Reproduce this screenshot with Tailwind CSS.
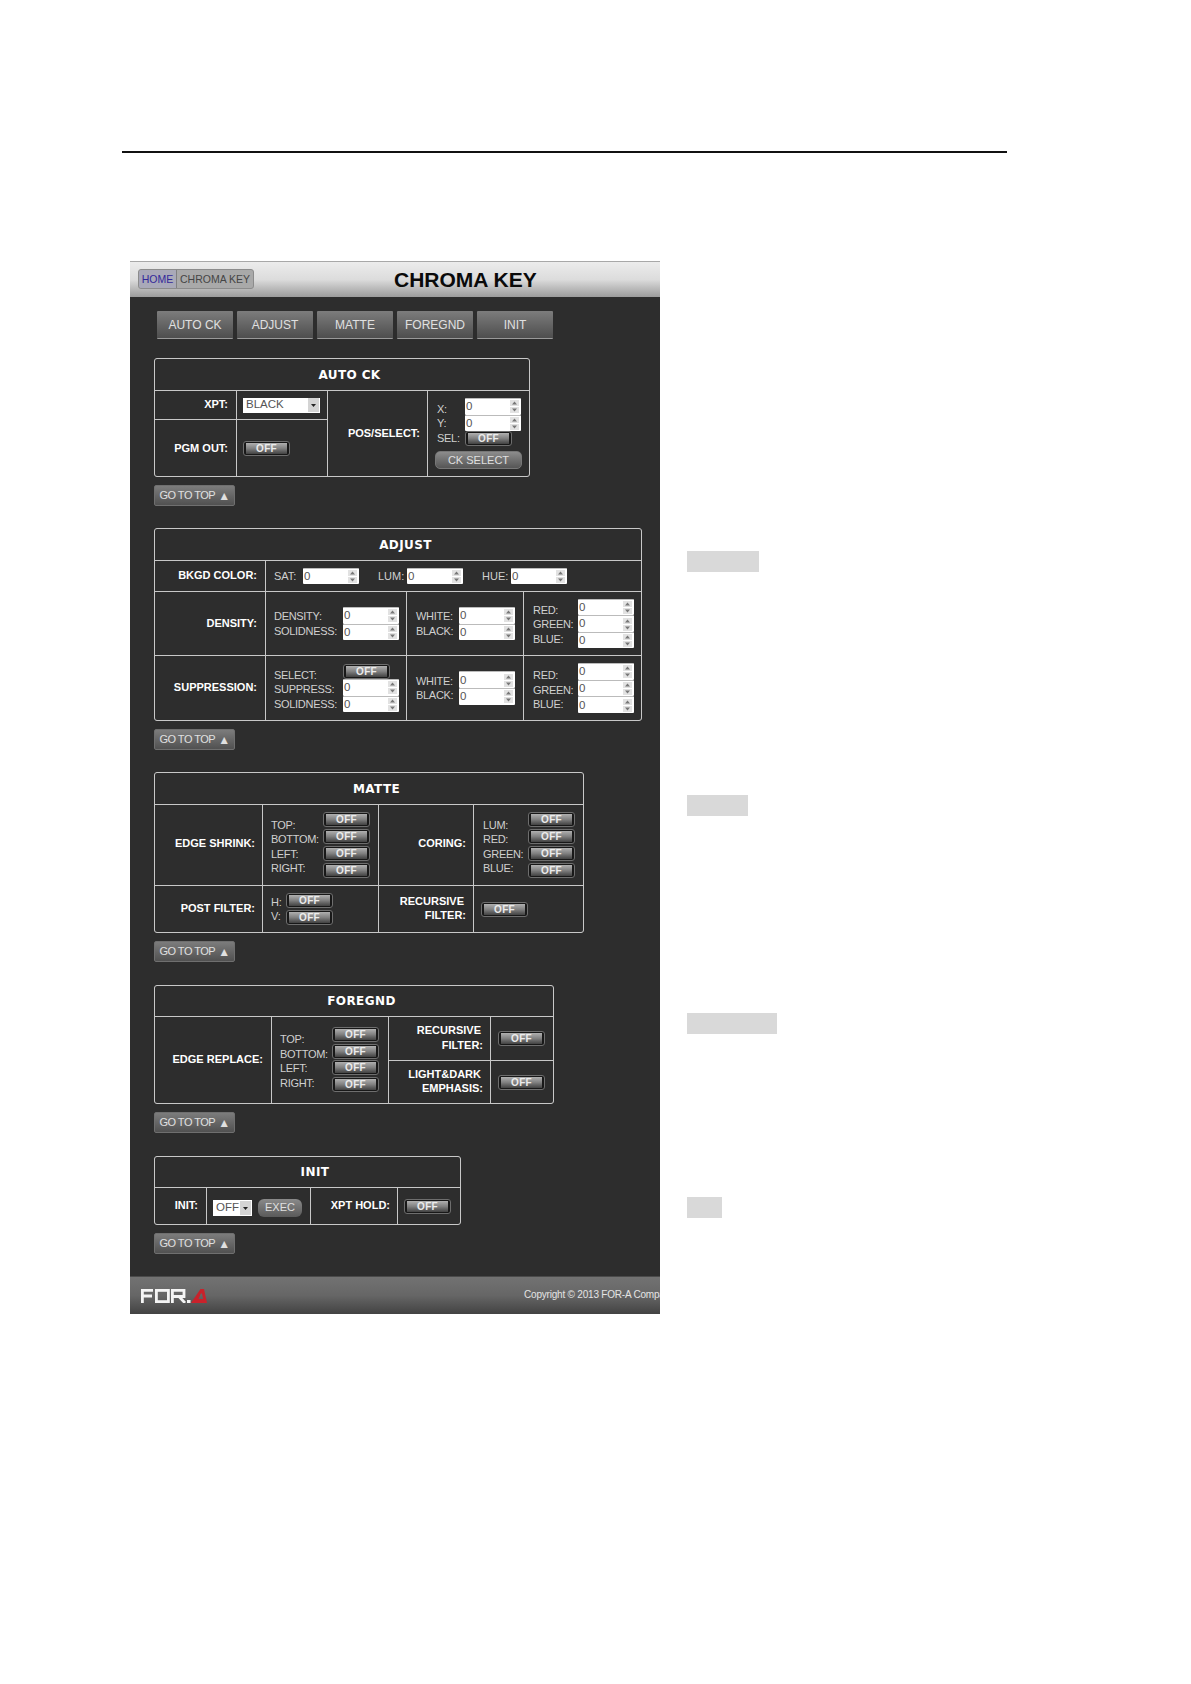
<!DOCTYPE html>
<html lang="en">

<head>
  <meta charset="UTF-8" />
  <title>Chroma Key</title>
  <script src="https://cdn.jsdelivr.net/npm/@tailwindcss/browser@4"></script>
</head>

<body class="bg-white m-0 h-[1684px] overflow-hidden font-['Liberation_Sans',Arial,sans-serif]">

  <div class="ml-[122px] mt-[151px] w-[885px] h-[2px] bg-[#111]"></div>

  <div class="flex mt-[108px]">
    <!-- screen capture -->
    <div class="ml-[130px] w-[530px] h-[1053px] flex flex-col overflow-hidden bg-[#2d2d2d] text-[11px] text-[#d0d0d0]">

      <div class="relative h-[36px] shrink-0 border-t border-[#a8a8a8] bg-gradient-to-b from-[#ececec] via-[#dcdcdc] to-[#9c9c9c]">
        <div class="absolute left-[8px] top-[7px] w-[116px] h-[20px] flex rounded-[3px] border border-[#8c8c8c] bg-[#a9a9a9] text-[10.5px] leading-[18px]">
          <span class="w-[38px] text-center text-[#33289a] bg-[#a9a9b8] rounded-l-[3px] border-r border-[#808080]">HOME</span>
          <span class="flex-1 text-center text-[#454545]">CHROMA KEY</span>
        </div>
        <div class="ml-[264px] w-[142px] mt-[7px] text-center text-[21px] leading-[21px] font-bold text-[#0a0a0a] whitespace-nowrap">CHROMA KEY</div>
      </div>

      <div class="flex gap-[4px] ml-[27px] mt-[14px] mb-[19px] text-[12px] text-[#e0e0e0]">
        <div class="w-[76px] h-[28px] flex items-center justify-center rounded-[1px] border-b border-[#999] bg-gradient-to-b from-[#7d7d7d] to-[#4e4e4e]">AUTO CK</div>
        <div class="w-[76px] h-[28px] flex items-center justify-center rounded-[1px] border-b border-[#999] bg-gradient-to-b from-[#7d7d7d] to-[#4e4e4e]">ADJUST</div>
        <div class="w-[76px] h-[28px] flex items-center justify-center rounded-[1px] border-b border-[#999] bg-gradient-to-b from-[#7d7d7d] to-[#4e4e4e]">MATTE</div>
        <div class="w-[76px] h-[28px] flex items-center justify-center rounded-[1px] border-b border-[#999] bg-gradient-to-b from-[#7d7d7d] to-[#4e4e4e]">FOREGND</div>
        <div class="w-[76px] h-[28px] flex items-center justify-center rounded-[1px] border-b border-[#999] bg-gradient-to-b from-[#7d7d7d] to-[#4e4e4e]">INIT</div>
      </div>

      <div class="ml-[24px]">

        <!-- AUTO CK -->
        <div class="mb-[22px]">
          <div class="w-[376px] h-[119px] grid grid-cols-[81px_90px_99px_101px] grid-rows-[31px_28px_56px] gap-px border border-[#c8c8c8] rounded-[3px] overflow-hidden bg-[#c8c8c8] [&>*]:bg-[#2d2d2d]">
            <div class="col-span-full flex items-center justify-center pl-[15px] font-['DejaVu_Sans',sans-serif] font-bold tracking-[0.4px] text-[12px] text-white">AUTO CK</div>
            <div class="flex items-center justify-end pr-[8px] pb-[2px] font-bold text-white">XPT:</div>
            <div class="flex items-center pl-[6px]">
              <div class="w-[77px] h-[15px] flex items-center bg-white pl-[3px] text-[#555] text-[11.5px]">BLACK<span data-drop class="ml-auto"></span></div>
            </div>
            <div class="row-span-2 flex items-center justify-end pr-[7px] pb-[1px] font-bold text-white">POS/SELECT:</div>
            <div class="row-span-2 pl-[9px] pt-[7px]">
              <div class="flex items-center">
                <div class="w-[28px] pt-[3px] leading-[14.5px] tracking-[-0.3px]">X:<br>Y:<br>SEL:</div>
                <div class="flex flex-col"><span data-spin></span><span data-spin></span><span data-off></span></div>
              </div>
              <div class="-ml-[2px] mt-[5px] w-[87px] h-[18px] flex items-center justify-center rounded-[5px] border border-[#777] bg-gradient-to-b from-[#8c8c8c] to-[#565656] text-[#e0e0e0]">CK SELECT</div>
            </div>
            <div class="flex items-center justify-end pr-[8px] font-bold text-white">PGM OUT:</div>
            <div class="flex items-center pl-[6px]"><span data-off></span></div>
          </div>
          <div class="mt-[8px] w-[81px] h-[21px] flex items-center justify-center gap-[3px] rounded-[2px] border border-[#6f6f6f] bg-gradient-to-b from-[#7c7c7c] to-[#515151] text-[11px] tracking-[-0.5px] text-[#e0e0e0]">GO TO TOP <span class="text-[12px]">▲</span></div>
        </div>

        <!-- ADJUST -->
        <div class="mb-[22px]">
          <div class="w-[488px] h-[193px] grid grid-cols-[110px_140px_116px_117px] grid-rows-[31px_30px_63px_64px] gap-px border border-[#c8c8c8] rounded-[3px] overflow-hidden bg-[#c8c8c8] [&>*]:bg-[#2d2d2d]">
            <div class="col-span-full flex items-center justify-center pl-[15px] font-['DejaVu_Sans',sans-serif] font-bold tracking-[0.4px] text-[12px] text-white">ADJUST</div>
            <div class="flex items-center justify-end pr-[8px] pb-[2px] font-bold text-white">BKGD COLOR:</div>
            <div class="col-span-3 flex items-center pl-[8px] gap-[19px]">
              <div class="flex items-center"><span class="w-[29px]">SAT:</span><span data-spin></span></div>
              <div class="flex items-center"><span class="w-[29px]">LUM:</span><span data-spin></span></div>
              <div class="flex items-center"><span class="w-[29px]">HUE:</span><span data-spin></span></div>
            </div>
            <div class="flex items-center justify-end pr-[8px] pb-[1px] font-bold text-white">DENSITY:</div>
            <div class="flex items-center pl-[8px]">
              <div class="w-[69px] leading-[14.5px] tracking-[-0.3px]">DENSITY:<br>SOLIDNESS:</div>
              <div class="flex flex-col"><span data-spin></span><span data-spin></span></div>
            </div>
            <div class="flex items-center pl-[9px]">
              <div class="w-[43px] leading-[14.5px] tracking-[-0.3px]">WHITE:<br>BLACK:</div>
              <div class="flex flex-col"><span data-spin></span><span data-spin></span></div>
            </div>
            <div class="flex items-center pl-[9px]">
              <div class="w-[45px] pt-[2px] leading-[14.5px] tracking-[-0.3px]">RED:<br>GREEN:<br>BLUE:</div>
              <div class="flex flex-col"><span data-spin></span><span data-spin></span><span data-spin></span></div>
            </div>
            <div class="flex items-center justify-end pr-[8px] pb-[2px] font-bold text-white">SUPPRESSION:</div>
            <div class="flex items-center pl-[8px]">
              <div class="w-[69px] leading-[14.5px] tracking-[-0.3px] pt-[3px]">SELECT:<br>SUPPRESS:<br>SOLIDNESS:</div>
              <div class="flex flex-col"><span data-off></span><span data-spin></span><span data-spin></span></div>
            </div>
            <div class="flex items-center pl-[9px]">
              <div class="w-[43px] leading-[14.5px] tracking-[-0.3px]">WHITE:<br>BLACK:</div>
              <div class="flex flex-col"><span data-spin></span><span data-spin></span></div>
            </div>
            <div class="flex items-center pl-[9px]">
              <div class="w-[45px] pt-[4px] leading-[14.5px] tracking-[-0.3px]">RED:<br>GREEN:<br>BLUE:</div>
              <div class="flex flex-col"><span data-spin></span><span data-spin></span><span data-spin></span></div>
            </div>
          </div>
          <div class="mt-[8px] w-[81px] h-[21px] flex items-center justify-center gap-[3px] rounded-[2px] border border-[#6f6f6f] bg-gradient-to-b from-[#7c7c7c] to-[#515151] text-[11px] tracking-[-0.5px] text-[#e0e0e0]">GO TO TOP <span class="text-[12px]">▲</span></div>
        </div>

        <!-- MATTE -->
        <div class="mb-[23px]">
          <div class="w-[430px] h-[161px] grid grid-cols-[107px_115px_94px_109px] grid-rows-[31px_80px_46px] gap-px border border-[#c8c8c8] rounded-[3px] overflow-hidden bg-[#c8c8c8] [&>*]:bg-[#2d2d2d]">
            <div class="col-span-full flex items-center justify-center pl-[15px] font-['DejaVu_Sans',sans-serif] font-bold tracking-[0.4px] text-[12px] text-white">MATTE</div>
            <div class="flex items-center justify-end pr-[7px] pb-[4px] font-bold text-white">EDGE SHRINK:</div>
            <div class="flex items-center pl-[8px]">
              <div class="w-[52px] pt-[3px] leading-[14.5px] tracking-[-0.3px]">TOP:<br>BOTTOM:<br>LEFT:<br>RIGHT:</div>
              <div class="flex flex-col gap-[1.7px]"><span data-off></span><span data-off></span><span data-off></span><span data-off></span></div>
            </div>
            <div class="flex items-center justify-end pr-[7px] pb-[4px] font-bold text-white">CORING:</div>
            <div class="flex items-center pl-[9px]">
              <div class="w-[45px] pt-[3px] leading-[14.5px] tracking-[-0.3px]">LUM:<br>RED:<br>GREEN:<br>BLUE:</div>
              <div class="flex flex-col gap-[1.7px]"><span data-off></span><span data-off></span><span data-off></span><span data-off></span></div>
            </div>
            <div class="flex items-center justify-end pr-[7px] pb-[1px] font-bold text-white">POST FILTER:</div>
            <div class="flex items-center pl-[8px]">
              <div class="w-[15px] leading-[14.5px] tracking-[-0.3px]">H:<br>V:</div>
              <div class="flex flex-col gap-[1.7px]"><span data-off></span><span data-off></span></div>
            </div>
            <div class="flex items-center justify-end text-right pr-[7px] pb-[2px] font-bold text-white leading-[14.5px]"><div><span class="pr-[2px]">RECURSIVE</span><br>FILTER:</div></div>
            <div class="flex items-center pl-[7px]"><span data-off></span></div>
          </div>
          <div class="mt-[8px] w-[81px] h-[21px] flex items-center justify-center gap-[3px] rounded-[2px] border border-[#6f6f6f] bg-gradient-to-b from-[#7c7c7c] to-[#515151] text-[11px] tracking-[-0.5px] text-[#e0e0e0]">GO TO TOP <span class="text-[12px]">▲</span></div>
        </div>

        <!-- FOREGND -->
        <div class="mb-[23px]">
          <div class="w-[400px] h-[119px] grid grid-cols-[116px_116px_101px_62px] grid-rows-[30px_43px_42px] gap-px border border-[#c8c8c8] rounded-[3px] overflow-hidden bg-[#c8c8c8] [&>*]:bg-[#2d2d2d]">
            <div class="col-span-full flex items-center justify-center pl-[15px] font-['DejaVu_Sans',sans-serif] font-bold tracking-[0.4px] text-[12px] text-white">FOREGND</div>
            <div class="row-span-2 flex items-center justify-end pr-[8px] pb-[1px] font-bold text-white">EDGE REPLACE:</div>
            <div class="row-span-2 flex items-start pl-[8px] pt-[10px]">
              <div class="w-[52px] pt-[5px] leading-[14.5px] tracking-[-0.3px]">TOP:<br>BOTTOM:<br>LEFT:<br>RIGHT:</div>
              <div class="flex flex-col gap-[1.7px]"><span data-off></span><span data-off></span><span data-off></span><span data-off></span></div>
            </div>
            <div class="flex items-center justify-end text-right pr-[7px] pb-[2px] font-bold text-white leading-[14.5px]"><div><span class="pr-[2px]">RECURSIVE</span><br>FILTER:</div></div>
            <div class="flex items-center pl-[7px]"><span data-off></span></div>
            <div class="flex items-center justify-end text-right pr-[7px] pb-[2px] font-bold text-white leading-[14.5px]"><div><span class="pr-[2px]">LIGHT&amp;DARK</span><br>EMPHASIS:</div></div>
            <div class="flex items-center pl-[7px]"><span data-off></span></div>
          </div>
          <div class="mt-[8px] w-[81px] h-[21px] flex items-center justify-center gap-[3px] rounded-[2px] border border-[#6f6f6f] bg-gradient-to-b from-[#7c7c7c] to-[#515151] text-[11px] tracking-[-0.5px] text-[#e0e0e0]">GO TO TOP <span class="text-[12px]">▲</span></div>
        </div>

        <!-- INIT -->
        <div>
          <div class="w-[307px] h-[69px] grid grid-cols-[51px_103px_86px_62px] grid-rows-[30px_36px] gap-px border border-[#c8c8c8] rounded-[3px] overflow-hidden bg-[#c8c8c8] [&>*]:bg-[#2d2d2d]">
            <div class="col-span-full flex items-center justify-center pl-[15px] font-['DejaVu_Sans',sans-serif] font-bold tracking-[0.4px] text-[12px] text-white">INIT</div>
            <div class="flex items-center justify-end pr-[8px] pb-[2px] font-bold text-white">INIT:</div>
            <div class="flex items-center pl-[6px] pt-[3px] gap-[6px]">
              <div class="w-[39px] h-[16px] flex items-center bg-white pl-[3px] text-[#555] text-[11.5px]">OFF<span data-drop class="ml-auto"></span></div>
              <div class="w-[44px] h-[18px] flex items-center justify-center rounded-[6px] bg-gradient-to-b from-[#8a8a8a] to-[#5a5a5a] text-[#e0e0e0]">EXEC</div>
            </div>
            <div class="flex items-center justify-end pr-[7px] pb-[2px] font-bold text-white">XPT HOLD:</div>
            <div class="flex items-center pl-[6px] pt-[1px]"><span data-off></span></div>
          </div>
          <div class="mt-[8px] w-[81px] h-[21px] flex items-center justify-center gap-[3px] rounded-[2px] border border-[#6f6f6f] bg-gradient-to-b from-[#7c7c7c] to-[#515151] text-[11px] tracking-[-0.5px] text-[#e0e0e0]">GO TO TOP <span class="text-[12px]">▲</span></div>
        </div>
      </div>

      <div class="mt-auto h-[38px] shrink-0 flex items-center border-t border-[#4a4a4a] bg-gradient-to-b from-[#727272] via-[#666] to-[#434343] whitespace-nowrap">
        <svg class="ml-[11px] shrink-0" width="66" height="14" viewBox="0 0 66 14" fill="none" stroke="#f4f4f4" stroke-width="2.8">
          <path d="M1.4 14V1.4H12M1.4 7H11" />
          <rect x="15.4" y="1.4" width="12" height="11.2" />
          <path d="M31.4 14V1.4H43V7.5H31.4M38 7.5L44 14" />
          <rect x="46" y="11" width="3.5" height="3" fill="#f4f4f4" stroke="none" />
          <path fill-rule="evenodd" d="M50 14L59.5 0H63L66 14ZM57.5 10H62.2L61 4.5H59.8Z" fill="#c9222b" stroke="none" />
        </svg>
        <span class="ml-[317px] -mt-[2px] text-[10px] tracking-[-0.2px] text-[#e4e4e4]">Copyright © 2013 FOR-A Company Limited. All rights reserved.</span>
      </div>
    </div>

    <!-- blurred section labels -->
    <div class="ml-[27px] flex flex-col">
      <div class="mt-[290px] w-[72px] h-[21px] bg-[#d9d9d9] blur-[0.5px]"></div>
      <div class="mt-[223px] w-[61px] h-[21px] bg-[#d9d9d9] blur-[0.5px]"></div>
      <div class="mt-[197px] w-[90px] h-[21px] bg-[#d9d9d9] blur-[0.5px]"></div>
      <div class="mt-[163px] w-[35px] h-[21px] bg-[#d9d9d9] blur-[0.5px]"></div>
    </div>
  </div>

  <script>
    const ARROW_UP = '<svg width="9" height="6" viewBox="0 0 9 6" class="bg-[#e2e2e2]"><path d="M4.5 1.5L7 4.5H2Z" fill="#777"/></svg>';
    const ARROW_DOWN = '<svg width="9" height="6" viewBox="0 0 9 6" class="bg-[#e2e2e2]"><path d="M4.5 4.5L7 1.5H2Z" fill="#777"/></svg>';
    const SPIN = `<div class="w-[56px] h-[16.67px] flex items-center rounded-[1px] border-t border-[#bbb] bg-white pl-[1px] text-[11.5px] text-[#555]">0<div class="ml-auto mr-[2px] flex flex-col gap-[1px]">${ARROW_UP}${ARROW_DOWN}</div></div>`;
    const OFF = '<div class="w-[47px] h-[15px] rounded-[3px] border border-[#6e6e6e] bg-[#181818] px-[2px] py-[1px]"><div class="h-full flex items-center justify-center bg-gradient-to-b from-[#b0b0b0] via-[#808080] to-[#424242] font-bold text-[10px] tracking-[0.3px] text-[#ececec]">OFF</div></div>';
    const DROP = '<svg width="11" height="14" viewBox="0 0 11 14" class="bg-[#d4d4d4] mr-[1px]"><path d="M3 6H8L5.5 9Z" fill="#222"/></svg>';

    document.querySelectorAll("[data-spin]").forEach((el) => (el.outerHTML = SPIN));
    document.querySelectorAll("[data-off]").forEach((el) => (el.outerHTML = OFF));
    document.querySelectorAll("[data-drop]").forEach((el) => {
      el.innerHTML = DROP;
    });
  </script>
</body>

</html>
